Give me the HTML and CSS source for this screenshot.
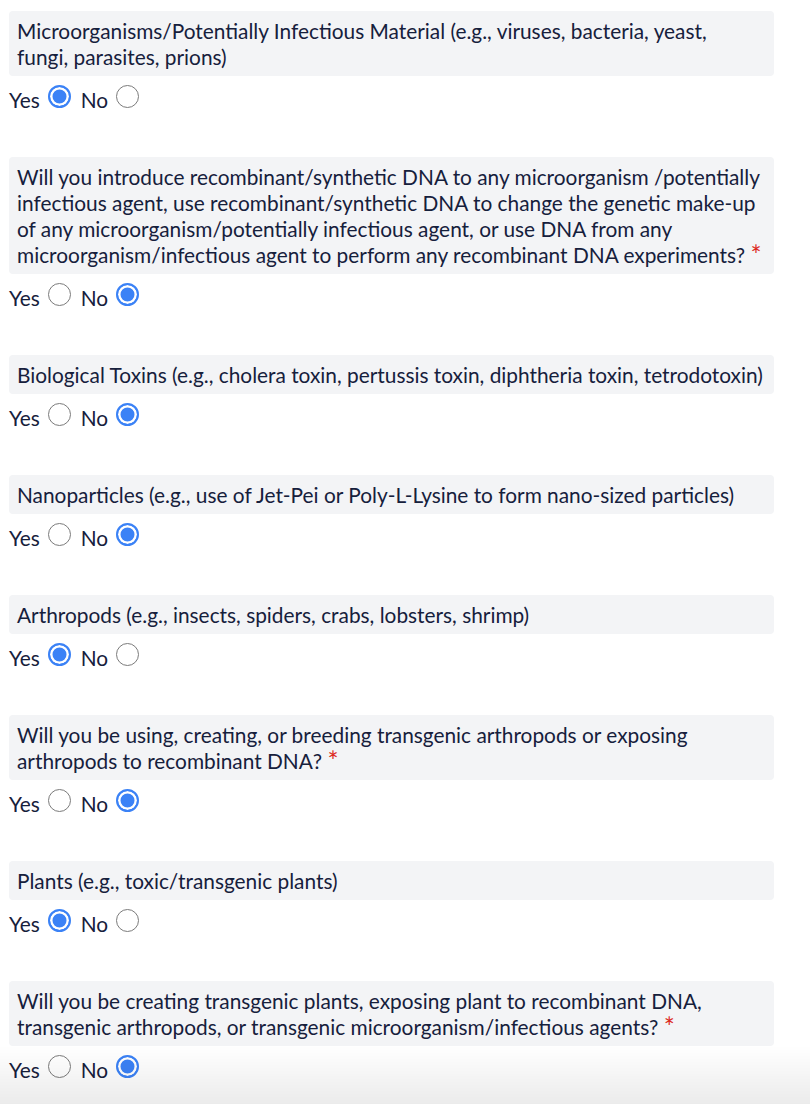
FILE: index.html
```html
<!DOCTYPE html>
<html lang="en">
<head>
<meta charset="utf-8">
<title>Hazard questions</title>
<link rel="stylesheet" href="styles.css">
</head>
<body>
<main class="form">
  <section class="question">
    <div class="label">Microorganisms/Potentially Infectious Material (e.g., viruses, bacteria, yeast,<br>fungi, parasites, prions)</div>
    <div class="options"><span class="opt">Yes</span><span class="radio on"></span><span class="opt">No</span><span class="radio"></span></div>
  </section>
  <section class="question">
    <div class="label">Will you introduce recombinant/synthetic DNA to any microorganism /potentially infectious agent, use recombinant/synthetic DNA to change the genetic make-up of any microorganism/potentially infectious agent, or use DNA from any microorganism/infectious agent to perform any recombinant DNA experiments? <span class="req">*</span></div>
    <div class="options"><span class="opt">Yes</span><span class="radio"></span><span class="opt">No</span><span class="radio on"></span></div>
  </section>
  <section class="question">
    <div class="label">Biological Toxins (e.g., cholera toxin, pertussis toxin, diphtheria toxin, tetrodotoxin)</div>
    <div class="options"><span class="opt">Yes</span><span class="radio"></span><span class="opt">No</span><span class="radio on"></span></div>
  </section>
  <section class="question">
    <div class="label">Nanoparticles (e.g., use of Jet-Pei or Poly-L-Lysine to form nano-sized particles)</div>
    <div class="options"><span class="opt">Yes</span><span class="radio"></span><span class="opt">No</span><span class="radio on"></span></div>
  </section>
  <section class="question">
    <div class="label">Arthropods (e.g., insects, spiders, crabs, lobsters, shrimp)</div>
    <div class="options"><span class="opt">Yes</span><span class="radio on"></span><span class="opt">No</span><span class="radio"></span></div>
  </section>
  <section class="question">
    <div class="label">Will you be using, creating, or breeding transgenic arthropods or exposing arthropods to recombinant DNA? <span class="req">*</span></div>
    <div class="options"><span class="opt">Yes</span><span class="radio"></span><span class="opt">No</span><span class="radio on"></span></div>
  </section>
  <section class="question">
    <div class="label">Plants (e.g., toxic/transgenic plants)</div>
    <div class="options"><span class="opt">Yes</span><span class="radio on"></span><span class="opt">No</span><span class="radio"></span></div>
  </section>
  <section class="question">
    <div class="label">Will you be creating transgenic plants, exposing plant to recombinant DNA, transgenic arthropods, or transgenic microorganism/infectious agents? <span class="req">*</span></div>
    <div class="options"><span class="opt">Yes</span><span class="radio"></span><span class="opt">No</span><span class="radio on"></span></div>
  </section>
</main>
<div class="fade"></div>
</body>
</html>
```

FILE: styles.css
```css
html, body {
  margin: 0;
  padding: 0;
  background: #ffffff;
}

body {
  font-family: Lato, "Open Sans", sans-serif;
  color: #16203c;
  overflow: hidden;
}

.form {
  width: 765px;
  margin: 11px 0 0 9px;
}

.question {
  margin-bottom: 44px;
}

.label {
  background: #f3f4f6;
  border-radius: 4px;
  padding: 7px 8px 6px 8px;
  font-size: 20.85px;
  line-height: 26px;
}

.req {
  color: #dc2a1e;
  font-size: 26px;
  line-height: 1;
  vertical-align: -2px;
}

.options {
  margin-top: 9px;
  font-size: 20.85px;
  line-height: 26px;
}

.opt {
  display: inline-block;
}

.radio {
  display: inline-block;
  box-sizing: border-box;
  width: 23px;
  height: 23px;
  border-radius: 50%;
  border: 1.5px solid #7b7b7b;
  background: #ffffff;
  margin: 0 10px 0 8px;
  vertical-align: baseline;
}

.radio.on {
  border: 2px solid #3b82f6;
  background: #3b82f6;
  box-shadow: inset 0 0 0 2.5px #ffffff;
}

.fade {
  position: fixed;
  left: 0;
  right: 0;
  bottom: 0;
  height: 58px;
  background: linear-gradient(to bottom, rgba(0, 0, 0, 0), rgba(0, 0, 0, 0.08));
  pointer-events: none;
}
```
